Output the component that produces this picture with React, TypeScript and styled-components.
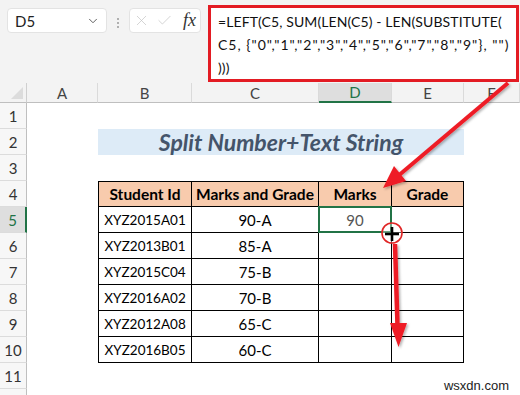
import React from "react";
import styled, { createGlobalStyle, css } from "styled-components";
import { X, Check, ChevronDown } from "lucide-react";

const GlobalStyle = createGlobalStyle`
  body {
    margin: 0;
    background: #ffffff;
    font-family: "Lato", "Open Sans", sans-serif;
  }
`;

const COLS = ["A", "B", "C", "D", "E", "F"];
const ROWS = [1, 2, 3, 4, 5, 6, 7, 8, 9, 10, 11, 12];

const students = [
  { id: "XYZ2015A01", grade: "90-A" },
  { id: "XYZ2013B01", grade: "85-A" },
  { id: "XYZ2015C04", grade: "75-B" },
  { id: "XYZ2016A02", grade: "70-B" },
  { id: "XYZ2012A08", grade: "65-C" },
  { id: "XYZ2016B05", grade: "60-C" },
];

function App() {
  return (
    <>
      <GlobalStyle />
      <Page>
        <TopBar>
          <NameBox>
            <span>D5</span>
            <ChevronDown size={14} strokeWidth={1.6} color="#555" />
          </NameBox>
          <Dots>
            <i />
            <i />
            <i />
          </Dots>
          <FxBox>
            <X size={17} strokeWidth={1} color="#c4c4c4" />
            <Check size={17} strokeWidth={1} color="#c4c4c4" />
            <FxLabel>fx</FxLabel>
          </FxBox>
          <FormulaBox>
            <FormulaLine>=LEFT(C5, SUM(LEN(C5) - LEN(SUBSTITUTE(</FormulaLine>
            <FormulaLine wide>C5, {'{"0","1","2","3","4","5","6","7","8","9"}, "")'}</FormulaLine>
            <FormulaLine>)))</FormulaLine>
          </FormulaBox>
        </TopBar>

        <Sheet>
          <Corner />
          {COLS.map((c) => (
            <ColHead key={c} active={c === "D"}>
              {c}
            </ColHead>
          ))}
          {ROWS.map((r) => (
            <RowHead key={r} active={r === 5} style={{ gridRow: r + 1 }}>
              {r < 12 ? r : ""}
            </RowHead>
          ))}

          <Title>Split Number+Text String</Title>

          <DataTable>
            <HeadCell>Student Id</HeadCell>
            <HeadCell>Marks and Grade</HeadCell>
            <HeadCell>Marks</HeadCell>
            <HeadCell>Grade</HeadCell>
            {students.map((s, i) => (
              <React.Fragment key={s.id}>
                <Cell first>{s.id}</Cell>
                <Cell>{s.grade}</Cell>
                <Cell muted>
                  {i === 0 ? "90" : ""}
                  {i === 0 && <Selection />}
                </Cell>
                <Cell />
              </React.Fragment>
            ))}
          </DataTable>
        </Sheet>

        <Annotations width="520" height="395" viewBox="0 0 520 395">
          <defs>
            <filter id="shadow" x="-20%" y="-20%" width="140%" height="140%">
              <feDropShadow dx="1.5" dy="1.5" stdDeviation="1.2" floodColor="#000" floodOpacity="0.3" />
            </filter>
          </defs>
          <g filter="url(#shadow)" fill="#ee1c25" stroke="none">
            <line x1="508" y1="83" x2="398" y2="176" stroke="#ee1c25" strokeWidth="4" />
            <polygon points="383,188 394,166 406,181" />
            <line x1="395" y1="244" x2="397.5" y2="326" stroke="#ee1c25" strokeWidth="4.5" />
            <polygon points="390,323 407,323 398.5,347" />
          </g>
          <circle cx="392" cy="233" r="10" fill="rgba(255,255,255,0.35)" stroke="#e02626" strokeWidth="1.6" />
          <g stroke="#000" strokeWidth="2.6">
            <line x1="385" y1="234" x2="399" y2="234" />
            <line x1="392" y1="227" x2="392" y2="241" />
          </g>
        </Annotations>

        <Watermark>wsxdn.com</Watermark>
      </Page>
    </>
  );
}

export default App;

const Page = styled.div`
  position: relative;
  width: 520px;
  height: 395px;
  overflow: hidden;
  background: #ffffff;
`;

const TopBar = styled.div`
  height: 83px;
  background: #f3f3f3;
  display: flex;
  align-items: flex-start;
  padding: 5px 0 0 7px;
  box-sizing: border-box;
`;

const NameBox = styled.div`
  margin-top: 3px;
  width: 100px;
  height: 25px;
  box-sizing: border-box;
  background: #ffffff;
  border: 1px solid #e3e3e3;
  border-radius: 4px;
  display: flex;
  align-items: center;
  justify-content: space-between;
  padding: 0 6px 0 7px;
  font-size: 15px;
  color: #222;
`;

const Dots = styled.div`
  margin-top: 13px;
  width: 22px;
  display: flex;
  flex-direction: column;
  align-items: center;
  gap: 2px;

  i {
    width: 2px;
    height: 2px;
    border-radius: 50%;
    background: #9a9a9a;
  }
`;

const FxBox = styled.div`
  margin-top: 3px;
  width: 72px;
  height: 25px;
  box-sizing: border-box;
  background: #ffffff;
  border: 1px solid #e3e3e3;
  border-radius: 4px;
  display: flex;
  align-items: center;
  gap: 6px;
  padding: 0 4px 0 3px;
`;

const FxLabel = styled.span`
  margin-left: auto;
  font-family: "Liberation Serif", serif;
  font-style: italic;
  font-size: 18px;
  color: #333;
`;

const FormulaBox = styled.div`
  margin-left: 7px;
  width: 311px;
  height: 77px;
  box-sizing: border-box;
  background: #ffffff;
  border: 3px solid #e31b23;
  padding: 2px 0 0 7px;
  font-size: 14px;
  line-height: 23px;
  color: #111;
  white-space: nowrap;
  overflow: hidden;
`;

const FormulaLine = styled.div<{ wide?: boolean }>`
  letter-spacing: ${(p) => (p.wide ? "1px" : "0.1px")};
`;

const Sheet = styled.div`
  display: grid;
  grid-template-columns: 27px 71px 94px 127px 73px 72px 56px;
  grid-template-rows: 20px repeat(12, 26px);
`;

const Corner = styled.div`
  background: #f3f3f3;
  border-right: 1px solid #cfcfcf;
  border-bottom: 1px solid #bfbfbf;
  box-sizing: border-box;
  position: relative;

  &::after {
    content: "";
    position: absolute;
    right: 3px;
    bottom: 3px;
    border-style: solid;
    border-width: 0 0 12px 12px;
    border-color: transparent transparent #dcdcdc transparent;
  }
`;

const ColHead = styled.div<{ active?: boolean }>`
  background: #f3f3f3;
  border-right: 1px solid #dadada;
  border-bottom: 1px solid #bfbfbf;
  box-sizing: border-box;
  display: flex;
  align-items: center;
  justify-content: center;
  font-size: 15px;
  color: #444;

  ${(p) =>
    p.active &&
    css`
      background: #dedede;
      color: #217346;
      border-bottom: 2px solid #217346;
    `}
`;

const RowHead = styled.div<{ active?: boolean }>`
  grid-column: 1;
  background: #f7f7f7;
  border-right: 1px solid #bfbfbf;
  border-bottom: 1px solid #dcdcdc;
  box-sizing: border-box;
  display: flex;
  align-items: center;
  justify-content: center;
  font-size: 15px;
  color: #333;

  ${(p) =>
    p.active &&
    css`
      background: #dedede;
      color: #217346;
      border-right: 2px solid #217346;
    `}
`;

const Title = styled.div`
  grid-column: 3 / 7;
  grid-row: 3;
  background: #ddebf7;
  display: flex;
  align-items: center;
  justify-content: center;
  font-weight: 700;
  font-style: italic;
  font-size: 23px;
  color: #44546a;
`;

const DataTable = styled.div`
  grid-column: 3 / 7;
  grid-row: 5 / 12;
  display: grid;
  grid-template-columns: 94px 127px 73px 72px;
  grid-template-rows: repeat(7, 26px);
`;

const HeadCell = styled.div`
  background: #f8cbad;
  border-top: 1px solid #000;
  border-right: 1px solid #000;
  border-bottom: 1px solid #000;
  box-sizing: border-box;
  display: flex;
  align-items: center;
  justify-content: center;
  font-weight: 700;
  font-size: 15.5px;
  color: #000;

  &:first-child {
    border-left: 1px solid #000;
  }
`;

const Cell = styled.div<{ first?: boolean; muted?: boolean }>`
  position: relative;
  border-right: 1px solid #000;
  border-bottom: 1px solid #000;
  box-sizing: border-box;
  display: flex;
  align-items: center;
  justify-content: center;
  font-size: ${(p) => (p.first ? "13.5px" : "15px")};
  color: ${(p) => (p.muted ? "#555" : "#000")};
  ${(p) =>
    p.first &&
    css`
      border-left: 1px solid #000;
    `}
`;

const Selection = styled.div`
  position: absolute;
  inset: -1px -1px -1px -1px;
  border: 2px solid #217346;
`;

const Annotations = styled.svg`
  position: absolute;
  top: 0;
  left: 0;
  pointer-events: none;
`;

const Watermark = styled.div`
  position: absolute;
  right: 11px;
  bottom: 2px;
  font-family: "Liberation Sans", sans-serif;
  font-size: 13px;
  color: #222;
`;
